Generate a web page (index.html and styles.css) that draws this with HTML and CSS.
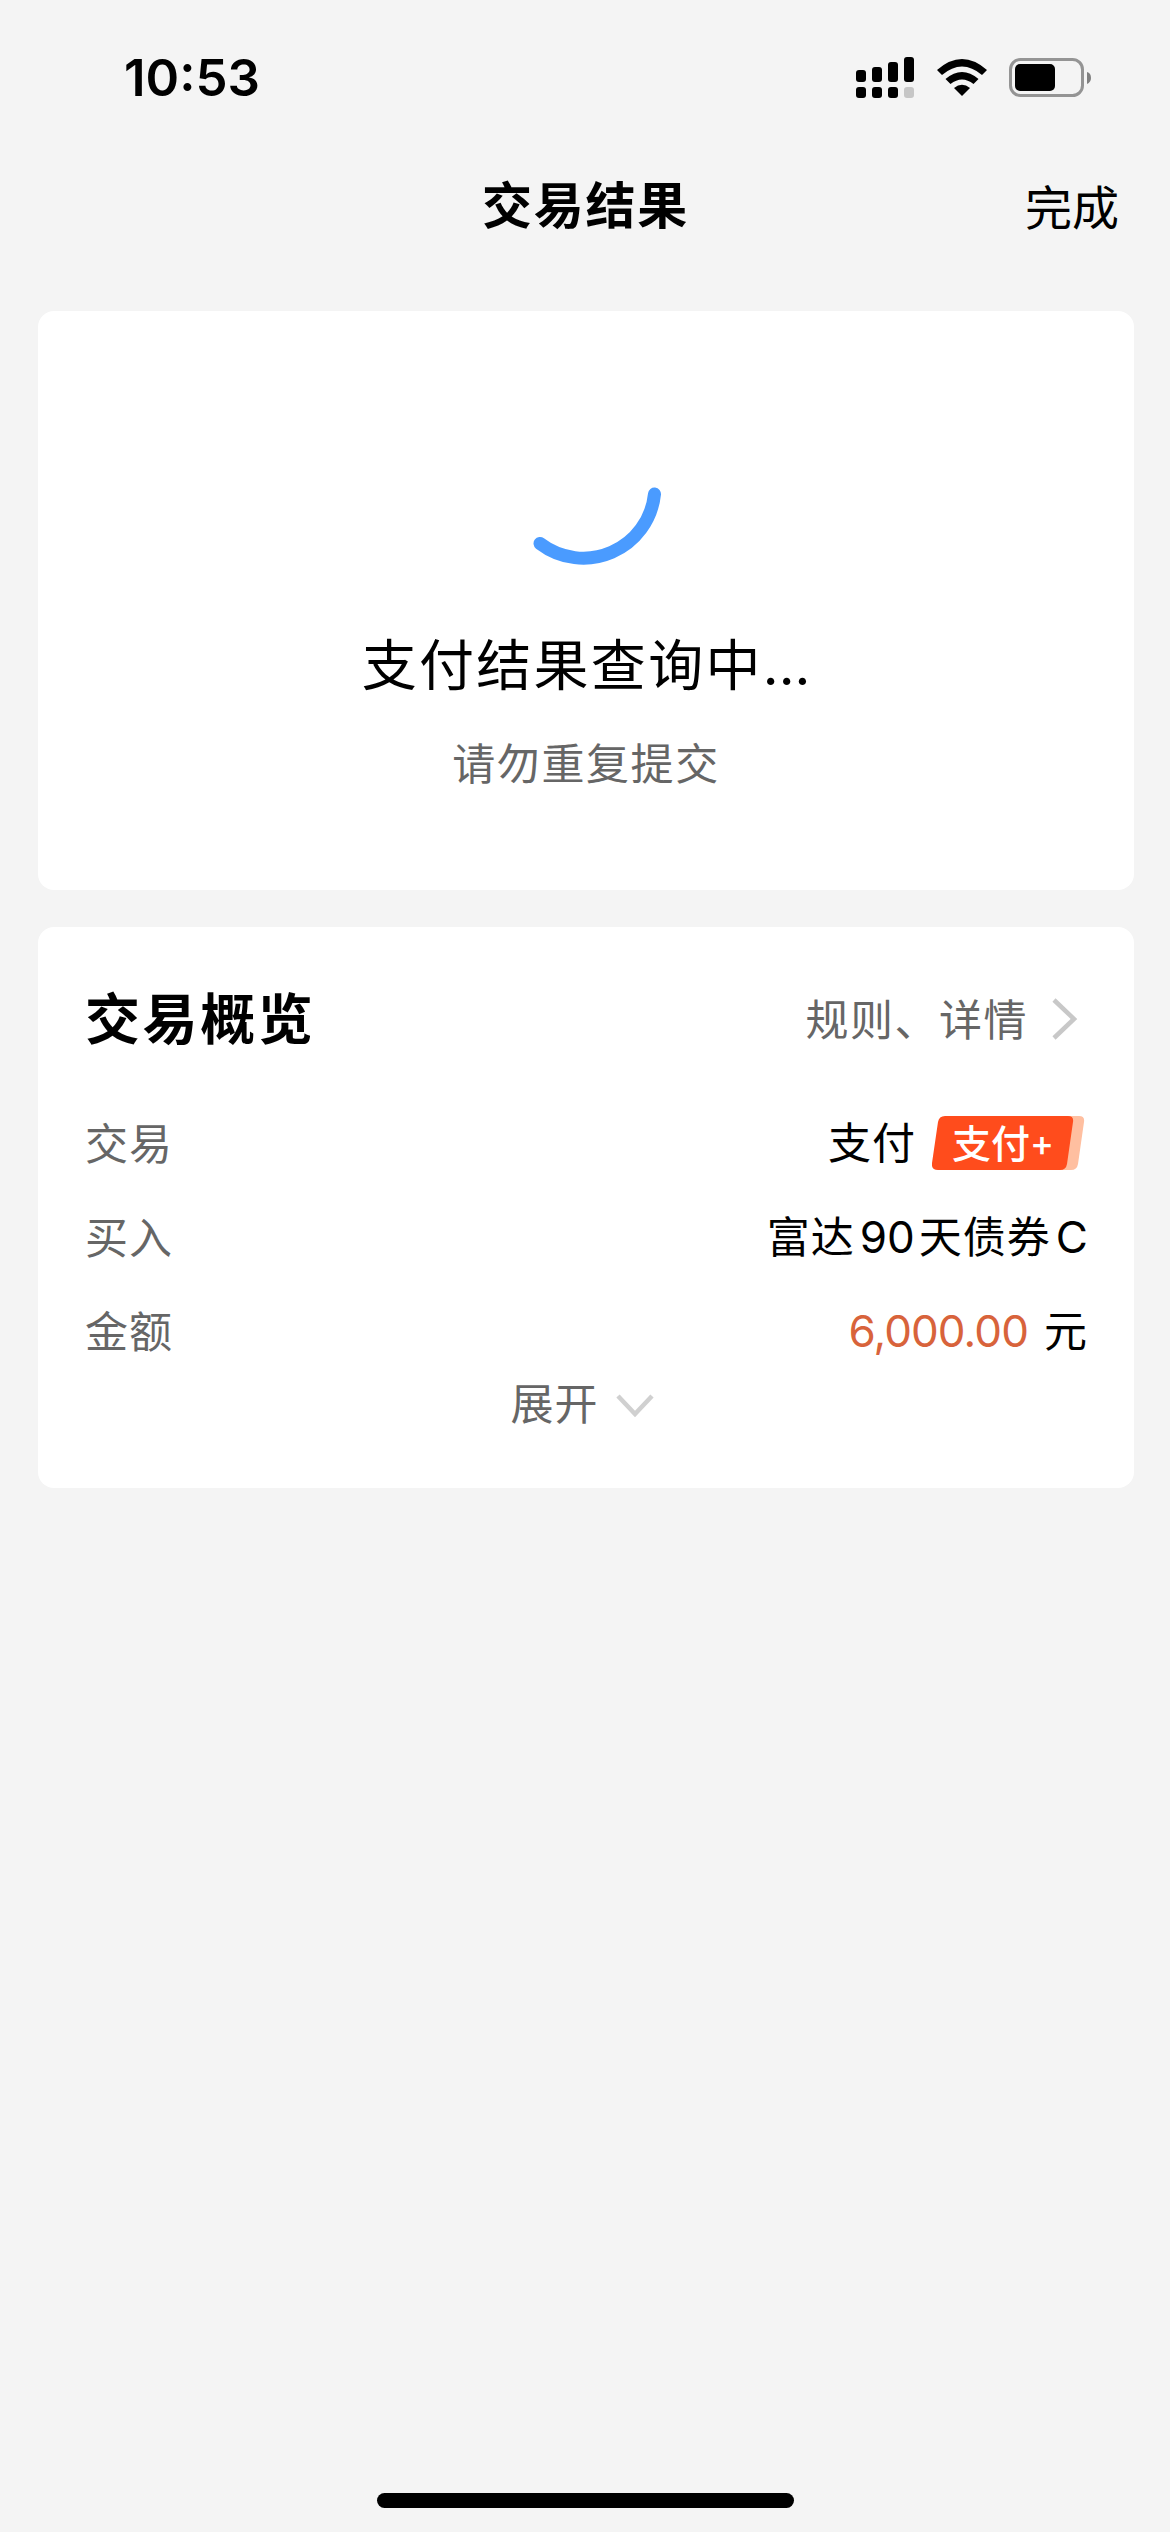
FILE: index.html
```html
<!DOCTYPE html>
<html lang="zh-CN">
<head>
    <meta charset="UTF-8">
    <title>交易结果</title>
    <meta name="viewport" content="width=device-width, initial-scale=1.0">
    <link rel="stylesheet" href="styles.css">
</head>
<body>
    <div class="status-bar">
        <span class="time">10:53</span>
        <div class="status-icons">
            <svg class="signal" width="58" height="42" viewBox="0 0 58 42">
                <rect x="0" y="13" width="10" height="12" rx="3"/>
                <rect x="16" y="10" width="10" height="15" rx="3"/>
                <rect x="32" y="5" width="10" height="20" rx="3"/>
                <rect x="48" y="0" width="10" height="25" rx="3"/>
                <rect x="0" y="30" width="10" height="11" rx="3"/>
                <rect x="16" y="30" width="10" height="11" rx="3"/>
                <rect x="32" y="30" width="10" height="11" rx="3"/>
                <rect x="48" y="30" width="10" height="11" rx="3" fill="#c6c6c6"/>
            </svg>
            <svg class="wifi" width="50" height="38" viewBox="0 0 50 38">
                <path d="M0 11 Q25 -11 50 11 L45 16 Q25 -1 5 16 Z"/>
                <path d="M8.500 20 Q25 6 41.500 20 L36.500 25 Q25 16 13.500 25 Z"/>
                <path d="M17 29 Q25 22.500 33 29 L25 37 Z"/>
            </svg>
            <svg class="battery" width="83" height="40" viewBox="0 0 83 40">
                <rect x="1.500" y="1.500" width="72" height="36" rx="10" fill="none" stroke="#949494" stroke-width="3"/>
                <rect x="6" y="6" width="40" height="27" rx="5"/>
                <path d="M78 14 Q82 15 82 20 Q82 24 78 26 Z" fill="#808080"/>
            </svg>
        </div>
    </div>

    <div class="nav">
        <h1>交易结果</h1>
        <a class="done">完成</a>
    </div>

    <div class="card result">
        <svg class="spinner" width="152" height="150" viewBox="0 0 152 150">
            <path d="M144.500 78 A71.500 71.500 0 0 1 30 127.500" fill="none" stroke="#4a9bff" stroke-width="13" stroke-linecap="round"/>
        </svg>
        <p class="result-title">支付结果查询中<span class="dots">...</span></p>
        <p class="result-tip">请勿重复提交</p>
    </div>

    <div class="card overview">
        <div class="overview-head">
            <h2>交易概览</h2>
            <a class="more">规则、详情
                <svg width="26" height="42" viewBox="0 0 26 42">
                    <path d="M2 2 L22 21 L2 40" fill="none" stroke="#c8c8c8" stroke-width="4.500"/>
                </svg>
            </a>
        </div>
        <div class="row">
            <span class="label">交易</span>
            <span class="value">支付
                <span class="badge">
                    <svg width="153" height="54" viewBox="0 0 153 54">
                        <path d="M20 0 H147 Q153 0 152 6 L146 48 Q145 54 139 54 H20 Z" fill="#ffbfa0"/>
                        <path d="M13 0 H136 Q142 0 141 6 L135 48 Q134 54 128 54 H6 Q-1 54 0 47 L6 6 Q7 0 13 0 Z" fill="#ff4c1c"/>
                    </svg>
                    <span class="badge-text">支付<i>+</i></span>
                </span>
            </span>
        </div>
        <div class="row">
            <span class="label">买入</span>
            <span class="value">富达<span class="num">90</span>天债券<span class="num last">C</span></span>
        </div>
        <div class="row">
            <span class="label">金额</span>
            <span class="value"><span class="amount">6,000.00</span>元</span>
        </div>
        <a class="expand">展开
            <svg width="38" height="24" viewBox="0 0 38 24">
                <path d="M2 2 L19 20 L36 2" fill="none" stroke="#d0d0d0" stroke-width="4.500"/>
            </svg>
        </a>
    </div>

    <div class="home-bar"></div>
</body>
</html>
```
FILE: styles.css
```css
* {
    box-sizing: border-box;
}

body {
    margin: 0;
    height: 2532px;
    background: #f4f4f4;
    color: #000;
    font-family: "Noto Sans CJK SC", Inter, sans-serif;
    display: flex;
    flex-direction: column;
    overflow: hidden;
}

h1, h2, p {
    margin: 0;
}

svg {
    display: block;
    flex: none;
}

.status-bar {
    height: 140px;
    padding: 46px 78px 0 124px;
    display: flex;
    justify-content: space-between;
    align-items: flex-start;
}

.time {
    font-family: Inter, sans-serif;
    font-size: 51px;
    font-weight: 600;
    line-height: 64px;
}

.status-icons {
    display: flex;
    padding-top: 11px;
}

.wifi {
    margin: 2px 22px 0 23px;
}

.battery {
    margin-top: 1px;
}

.nav {
    height: 124px;
    margin-bottom: 47px;
    padding: 0 51px 0 52px;
    display: grid;
    grid-template-columns: 1fr auto 1fr;
    align-items: center;
}

.nav h1 {
    grid-column: 2;
    font-size: 50px;
    font-weight: 700;
    line-height: 60px;
    letter-spacing: 1.8px;
}

.done {
    justify-self: end;
    padding-top: 5px;
    font-size: 47px;
    line-height: 60px;
}

.card {
    margin: 0 36px 37px 38px;
    background: #fff;
    border-radius: 16px;
}

.result {
    height: 579px;
    padding-top: 105px;
    display: flex;
    flex-direction: column;
    align-items: center;
}

.result-title {
    margin-top: 60px;
    font-size: 55px;
    line-height: 70px;
    letter-spacing: 2.3px;
}

.dots {
    font-family: Inter, sans-serif;
    letter-spacing: 0;
}

.result-tip {
    margin-top: 33px;
    color: #666;
    font-size: 43px;
    line-height: 56px;
    letter-spacing: 1.6px;
}

.overview {
    height: 561px;
    padding: 53px 46px 0 47px;
    display: flex;
    flex-direction: column;
}

.overview-head {
    height: 70px;
    margin-bottom: 44px;
    display: flex;
    justify-content: space-between;
    align-items: center;
}

.overview-head h2 {
    font-size: 55px;
    font-weight: 700;
    line-height: 70px;
    letter-spacing: 2.6px;
}

.more {
    display: flex;
    align-items: center;
    gap: 24px;
    padding: 3px 10px 0 0;
    color: #666;
    font-size: 43px;
    line-height: 56px;
    letter-spacing: 1.5px;
}

.more svg {
    margin-top: 5px;
}

.row {
    height: 94px;
    display: flex;
    justify-content: space-between;
    align-items: center;
    font-size: 43px;
    line-height: 56px;
    letter-spacing: 1px;
}

.label {
    color: #666;
}

.value {
    display: flex;
    align-items: baseline;
}

.num {
    margin: 0 4px 0 5px;
    font-family: Inter, sans-serif;
    font-size: 44px;
    letter-spacing: 0;
}

.num.last {
    margin-right: 0;
}

.amount {
    margin-right: 16px;
    color: #d8633b;
    font-family: Inter, sans-serif;
    font-size: 44px;
    letter-spacing: -0.9px;
}

.badge {
    position: relative;
    align-self: center;
    margin: 4px 3px 0 16px;
}

.badge-text {
    position: absolute;
    left: 20px;
    top: -3px;
    color: #fff;
    font-size: 39px;
    font-weight: 500;
    letter-spacing: 0;
    white-space: nowrap;
}

.badge-text i {
    font-family: Inter, sans-serif;
    font-size: 36px;
    font-style: normal;
    vertical-align: 2px;
}

.expand {
    height: 50px;
    padding-right: 9px;
    display: flex;
    justify-content: center;
    align-items: center;
    gap: 17px;
    color: #666;
    font-size: 43px;
    line-height: 50px;
    letter-spacing: 1px;
}

.expand svg {
    margin-top: 10px;
}

.home-bar {
    width: 417px;
    height: 15px;
    margin: auto auto 24px 377px;
    border-radius: 8px;
    background: #000;
}
```
